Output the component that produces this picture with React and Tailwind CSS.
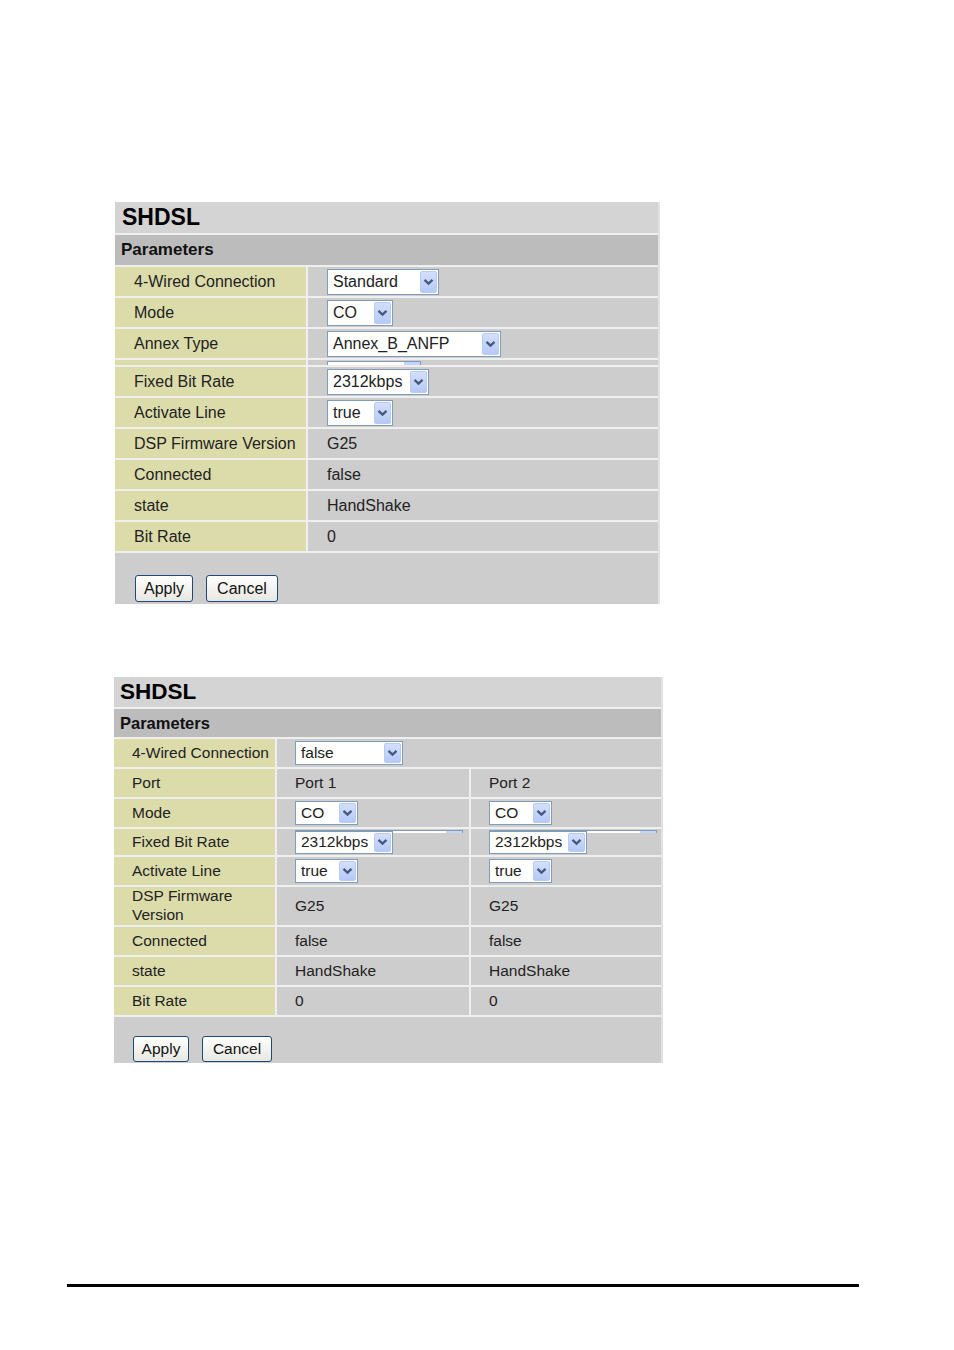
function Chevron() {
  return (
    <svg width="11" height="8" viewBox="0 0 11 8">
      <path d="M1.5 1.8 L5.5 5.6 L9.5 1.8" fill="none" stroke="#45597d" strokeWidth="2.3" />
    </svg>
  );
}

function Select({ className, children }) {
  return (
    <div className={`flex items-stretch bg-white border border-[#7f9db9] p-[1px] ${className}`}>
      <span className="flex flex-1 items-center pl-[4px] leading-none">{children}</span>
      <span className="flex w-[17px] items-center justify-center rounded-[2px] border border-[#b9cbf3] bg-gradient-to-b from-[#d3dffc] to-[#b6c9f7]">
        <Chevron />
      </span>
    </div>
  );
}

function Button({ className, children }) {
  return (
    <button
      type="button"
      className={`rounded-[3px] border border-[#1d4a7a] bg-gradient-to-b from-white to-[#e8e7e1] text-[#111] leading-none ${className}`}
    >
      {children}
    </button>
  );
}

function FirstTable() {
  const label = "flex items-center bg-[#dcdcab] pl-[19px] text-[#222]";
  const value = "flex items-center bg-[#cdcdcd] pl-[19px] text-[#222]";
  const row = "grid grid-cols-[191px_1fr] gap-x-[2px]";
  return (
    <div className="ml-[115px] flex w-[545px] flex-col gap-[2px] border-r-2 border-[#e2e2e2] bg-[#efefef] text-[16px]">
      <div className="flex h-[31px] items-center bg-[#d4d4d4] pl-[7px] text-[23px] font-bold text-black">SHDSL</div>
      <div className="flex h-[30px] items-center bg-[#bcbcbc] pl-[6px] text-[17px] font-bold text-[#111]">Parameters</div>
      <div className={`${row} h-[29px]`}>
        <div className={label}>4-Wired Connection</div>
        <div className={value}>
          <Select className="w-[112px] h-[26px]">Standard</Select>
        </div>
      </div>
      <div className={`${row} h-[29px]`}>
        <div className={label}>Mode</div>
        <div className={value}>
          <Select className="w-[66px] h-[26px]">CO</Select>
        </div>
      </div>
      <div className={`${row} h-[29px]`}>
        <div className={label}>Annex Type</div>
        <div className={value}>
          <Select className="w-[174px] h-[26px]">Annex_B_ANFP</Select>
        </div>
      </div>
      <div className={`${row} h-[5px]`}>
        <div className="bg-[#dcdcab]" />
        <div className="bg-[#cdcdcd] pl-[19px] pt-[1px]">
          <div className="flex h-[4px] w-[94px] border border-b-0 border-[#7f9db9] bg-white">
            <span className="ml-auto w-[16px] bg-[#c4d4fa]" />
          </div>
        </div>
      </div>
      <div className={`${row} h-[29px]`}>
        <div className={label}>Fixed Bit Rate</div>
        <div className={value}>
          <Select className="w-[102px] h-[26px]">2312kbps</Select>
        </div>
      </div>
      <div className={`${row} h-[29px]`}>
        <div className={label}>Activate Line</div>
        <div className={value}>
          <Select className="w-[66px] h-[26px]">true</Select>
        </div>
      </div>
      <div className={`${row} h-[29px]`}>
        <div className={label}>DSP Firmware Version</div>
        <div className={value}>G25</div>
      </div>
      <div className={`${row} h-[29px]`}>
        <div className={label}>Connected</div>
        <div className={value}>false</div>
      </div>
      <div className={`${row} h-[29px]`}>
        <div className={label}>state</div>
        <div className={value}>HandShake</div>
      </div>
      <div className={`${row} h-[29px]`}>
        <div className={label}>Bit Rate</div>
        <div className={value}>0</div>
      </div>
      <div className="flex h-[51px] items-start gap-[13px] bg-[#cdcdcd] pl-[20px] pt-[22px]">
        <Button className="h-[27px] w-[58px] text-[16px]">Apply</Button>
        <Button className="h-[27px] w-[72px] text-[16px]">Cancel</Button>
      </div>
    </div>
  );
}

function SecondTable() {
  const label = "flex items-center bg-[#dcdcab] pl-[18px] text-[#222] leading-[1.2]";
  const value = "relative flex items-center bg-[#cdcdcd] pl-[18px] text-[#222]";
  const row = "grid grid-cols-[161px_192px_1fr] gap-x-[2px]";
  const strip = (
    <div className="absolute left-[18px] top-[1px] flex h-[3px] w-[168px] border border-b-0 border-[#7f9db9] bg-white">
      <span className="ml-auto w-[16px] bg-[#c4d4fa]" />
    </div>
  );
  return (
    <div className="ml-[114px] mt-[73px] flex w-[549px] flex-col gap-[2px] border-r-2 border-[#e2e2e2] bg-[#efefef] text-[15.5px]">
      <div className="flex h-[30px] items-center bg-[#d4d4d4] pl-[6px] text-[22.5px] font-bold text-black">SHDSL</div>
      <div className="flex h-[28px] items-center bg-[#bcbcbc] pl-[6px] text-[16.5px] font-bold text-[#111]">Parameters</div>
      <div className="grid h-[28px] grid-cols-[161px_1fr] gap-x-[2px]">
        <div className={label}>4-Wired Connection</div>
        <div className={value}>
          <Select className="w-[108px] h-[24px]">false</Select>
        </div>
      </div>
      <div className={`${row} h-[28px]`}>
        <div className={label}>Port</div>
        <div className={value}>Port 1</div>
        <div className={value}>Port 2</div>
      </div>
      <div className={`${row} h-[28px]`}>
        <div className={label}>Mode</div>
        <div className={value}>
          <Select className="w-[63px] h-[24px]">CO</Select>
        </div>
        <div className={value}>
          <Select className="w-[63px] h-[24px]">CO</Select>
        </div>
      </div>
      <div className={`${row} h-[26px]`}>
        <div className={label}>Fixed Bit Rate</div>
        <div className={value}>
          {strip}
          <Select className="relative w-[98px] h-[23px]">2312kbps</Select>
        </div>
        <div className={value}>
          {strip}
          <Select className="relative w-[98px] h-[23px]">2312kbps</Select>
        </div>
      </div>
      <div className={`${row} h-[28px]`}>
        <div className={label}>Activate Line</div>
        <div className={value}>
          <Select className="w-[63px] h-[24px]">true</Select>
        </div>
        <div className={value}>
          <Select className="w-[63px] h-[24px]">true</Select>
        </div>
      </div>
      <div className={`${row} h-[38px]`}>
        <div className={label}>
          DSP Firmware
          <br />
          Version
        </div>
        <div className={value}>G25</div>
        <div className={value}>G25</div>
      </div>
      <div className={`${row} h-[28px]`}>
        <div className={label}>Connected</div>
        <div className={value}>false</div>
        <div className={value}>false</div>
      </div>
      <div className={`${row} h-[28px]`}>
        <div className={label}>state</div>
        <div className={value}>HandShake</div>
        <div className={value}>HandShake</div>
      </div>
      <div className={`${row} h-[28px]`}>
        <div className={label}>Bit Rate</div>
        <div className={value}>0</div>
        <div className={value}>0</div>
      </div>
      <div className="flex h-[46px] items-start gap-[13px] bg-[#cdcdcd] pl-[19px] pt-[19px]">
        <Button className="h-[26px] w-[56px] text-[15.5px]">Apply</Button>
        <Button className="h-[26px] w-[70px] text-[15.5px]">Cancel</Button>
      </div>
    </div>
  );
}

export default function App() {
  return (
    <div className="min-h-[1350px] w-[954px] bg-white pt-[202px] font-['Liberation_Sans',Arial,sans-serif]">
      <FirstTable />
      <SecondTable />
      <div className="ml-[67px] mt-[221px] h-[3px] w-[792px] bg-black" />
    </div>
  );
}
